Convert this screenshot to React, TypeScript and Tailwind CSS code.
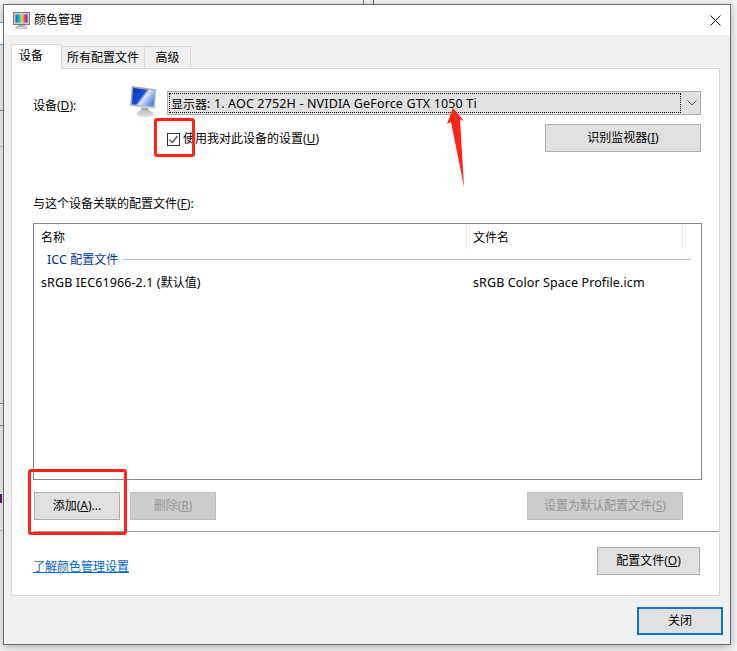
import React from "react";

const FONT = "font-['Noto_Sans','Noto_Sans_CJK_SC',sans-serif]";
// latin runs come out a bit wider than the CJK size in the reference
const LATIN = "text-[12.5px] tracking-[0.1px]";

function TitleIcon() {
  return (
    <svg width="17" height="17" viewBox="0 0 17 17" className="shrink-0">
      <defs>
        <linearGradient id="rainbow" x1="0" y1="0" x2="1" y2="0">
          <stop offset="0" stopColor="#1565d8" />
          <stop offset="0.3" stopColor="#17b8c8" />
          <stop offset="0.55" stopColor="#e8e020" />
          <stop offset="0.8" stopColor="#e82a8a" />
          <stop offset="1" stopColor="#8a22d8" />
        </linearGradient>
      </defs>
      <rect x="0.5" y="0.5" width="16" height="12" fill="#c9ccd0" stroke="#777b80" />
      <rect x="2.5" y="2.5" width="12" height="8" fill="url(#rainbow)" />
      <rect x="5" y="13" width="7" height="1.5" fill="#a9adb2" />
      <rect x="3" y="14.5" width="11" height="2" fill="#d4d6d9" stroke="#9a9da1" strokeWidth="0.5" />
    </svg>
  );
}

function MonitorIcon() {
  return (
    <svg width="29" height="32" viewBox="0 0 31 34" className="shrink-0">
      <defs>
        <linearGradient id="screen" x1="0" y1="0" x2="1" y2="0.6">
          <stop offset="0" stopColor="#0a2ca8" />
          <stop offset="0.5" stopColor="#1450d8" />
          <stop offset="0.62" stopColor="#dfe9fb" />
          <stop offset="1" stopColor="#5f86d8" />
        </linearGradient>
        <linearGradient id="frame" x1="0" y1="0" x2="1" y2="1">
          <stop offset="0" stopColor="#8f98a8" />
          <stop offset="1" stopColor="#d3d6da" />
        </linearGradient>
        <linearGradient id="foot" x1="0" y1="0" x2="0" y2="1">
          <stop offset="0" stopColor="#b8bbbf" />
          <stop offset="1" stopColor="#e6e7e8" />
        </linearGradient>
      </defs>
      <path d="M2 0 L28 3.5 L27 24.5 L0 21 Z" fill="url(#frame)" />
      <path d="M3.5 2 L26.5 5 L25.5 22 L2 19.5 Z" fill="url(#screen)" />
      <path d="M12 23 L20 24 L20 27 L12 27 Z" fill="#a3a7ac" />
      <ellipse cx="16" cy="29.5" rx="9" ry="4" fill="url(#foot)" />
    </svg>
  );
}

function Btn({
  children,
  className = "",
  disabled = false,
}: {
  children: React.ReactNode;
  className?: string;
  disabled?: boolean;
}) {
  return (
    <div
      className={`h-[28px] flex items-center justify-center border shrink-0 text-[12px] ${
        disabled
          ? "bg-[#cccccc] border-[#bfbfbf] text-[#969696]"
          : "bg-[#e1e1e1] border-[#adadad] text-black"
      } ${className}`}
    >
      {children}
    </div>
  );
}

export default function App() {
  return (
    <div className={`relative w-[737px] h-[651px] overflow-hidden bg-[#f4f4f4] ${FONT}`}>
      {/* bits of other windows behind the dialog */}
      <div className="absolute left-0 top-[22px] w-[3px] h-[23px] border-y border-[#5b9bd5] bg-white" />
      <div className="absolute left-0 top-[110px] w-[3px] h-px bg-[#8a8a8a]" />
      <div className="absolute left-0 top-[146px] w-[3px] h-px bg-[#a8b4c8]" />
      <div className="absolute left-0 top-[403px] w-[3px] h-px bg-[#8a8a8a]" />
      <div className="absolute left-0 top-[425px] w-[3px] h-px bg-[#8a8a8a]" />
      <div className="absolute left-0 top-[494px] w-[2px] h-[9px] bg-[#5a1a6a]" />
      <div className="absolute left-0 top-[530px] w-[3px] h-px bg-[#b0b0b0]" />
      <div className="absolute left-[363px] top-0 w-px h-[4px] bg-[#777]" />
      <div className="absolute left-[373px] top-0 w-px h-[4px] bg-[#555]" />

      <div className="pt-[4px] pl-[3px]">
        <div className="w-[728px] h-[641px] border border-[#6e6e6e] bg-[#f0f0f0] flex flex-col shadow-[0_2px_8px_rgba(0,0,0,0.3)]">
          {/* title bar */}
          <div className="h-[30px] bg-white flex items-center pl-[9px] pr-[9px] shrink-0">
            <TitleIcon />
            <span className="ml-[4px] text-[12px] text-black">颜色管理</span>
            <svg width="11" height="11" viewBox="0 0 11 11" className="ml-auto">
              <path d="M0.5 0.5 L10.5 10.5 M10.5 0.5 L0.5 10.5" stroke="#111" strokeWidth="1" />
            </svg>
          </div>

          {/* tabs */}
          <div className="pl-[7px] pt-[9px] flex items-end h-[33px] shrink-0 text-[12px] text-black">
            <div className="relative z-10 w-[51px] h-[25px] -mb-px bg-white border border-b-0 border-[#d9d9d9] flex items-center pl-[7px] pb-[3px]">
              设备
            </div>
            <div className="w-[83px] h-[22px] border border-l-0 border-b-0 border-[#d9d9d9] flex items-center justify-center">
              所有配置文件
            </div>
            <div className="w-[46px] h-[22px] border border-l-0 border-b-0 border-[#d9d9d9] flex items-center justify-center">
              高级
            </div>
          </div>

          {/* tab panel */}
          <div className="ml-[7px] w-[709px] h-[528px] bg-white border border-[#d9d9d9] shrink-0 pl-[21px] pt-[22px] text-[12px] text-black">
            <div className="flex items-center w-[668px] h-[24px]">
              <span className="w-[97px] pt-[6px]">
                设备(<u>D</u>):
              </span>
              <div className="w-[37px] -mt-[2px]">
                <MonitorIcon />
              </div>
              <div className="w-[534px] h-[24px] bg-[#e1e1e1] border border-[#adadad] flex items-center pl-[1px]">
                <div className="w-[512px] h-[20px] border border-dotted border-black flex items-center pl-[1px] pt-[3px]">
                  显示器<span className="text-[12.5px] tracking-[0.15px]">: 1. AOC 2752H - NVIDIA GeForce GTX 1050 Ti</span>
                </div>
                <svg width="10" height="6" viewBox="0 0 10 6" className="ml-[6px]">
                  <path d="M0.5 0.5 L5 5 L9.5 0.5" fill="none" stroke="#606060" />
                </svg>
              </div>
            </div>

            <div className="flex items-start w-[668px] mt-[9px] pl-[134px]">
              <div className="flex items-center mt-[6px]">
                <div className="w-[13px] h-[13px] border border-[#333] flex items-center justify-center">
                  <svg width="11" height="11" viewBox="0 0 11 11">
                    <path d="M1.5 5.5 L4.5 8.5 L9.5 2" fill="none" stroke="#555" strokeWidth="1.3" />
                  </svg>
                </div>
                <span className="ml-[3px]">
                  使用我对此设备的设置(<u>U</u>)
                </span>
              </div>
              <Btn className="ml-auto w-[156px]">
                识别监视器(<u>I</u>)
              </Btn>
            </div>

            <div className="mt-[43px] leading-[18px]">
              与这个设备关联的配置文件(<u>F</u>):
            </div>

            {/* profile list */}
            <div className="mt-[10px] w-[669px] h-[257px] border border-[#828790] bg-white pt-[1px]">
              <div className="flex h-[24px] items-center">
                <span className="w-[433px] pl-[7px] pt-[2px] h-full flex items-center border-r border-[#e5e5e5]">名称</span>
                <span className="w-[216px] pl-[6px] pt-[2px] h-full flex items-center border-r border-[#e5e5e5]">文件名</span>
              </div>
              <div className="flex items-center h-[20px] pl-[13px] pr-[10px] mt-[1px] text-[#003399]">
                <span className="w-[76px] whitespace-nowrap">
                  <span className={LATIN}>ICC</span> 配置文件
                </span>
                <div className="h-px flex-1 bg-[#b0bcd6] -mt-[2px]" />
              </div>
              <div className="flex items-center h-[20px] mt-[3px]">
                <span className="w-[433px] pl-[7px]">
                  <span className={LATIN}>sRGB IEC61966-2.1 (</span>默认值<span className={LATIN}>)</span>
                </span>
                <span className={`pl-[6px] ${LATIN}`}>sRGB Color Space Profile.icm</span>
              </div>
            </div>

            <div className="flex w-[650px] mt-[12px] pl-px">
              <Btn className="w-[86px]">
                添加(<u>A</u>)...
              </Btn>
              <Btn disabled className="w-[86px] ml-[10px]">
                删除(<u>R</u>)
              </Btn>
              <Btn disabled className="w-[156px] ml-auto">
                设置为默认配置文件(<u>S</u>)
              </Btn>
            </div>

            <div className="h-px w-[686px] bg-[#a0a0a0] mt-[11px]" />

            <div className="flex items-start w-[667px] mt-[15px]">
              <a className="text-[#0066cc] underline mt-[11px]">了解颜色管理设置</a>
              <Btn className="ml-auto w-[103px]">
                配置文件(<u>O</u>)
              </Btn>
            </div>
          </div>

          {/* footer */}
          <div className="flex justify-end pr-[7px] mt-[11px]">
            <div className="w-[86px] h-[28px] bg-[#e1e1e1] border-2 border-[#0078d7] flex items-center justify-center text-[12px] text-black">
              关闭
            </div>
          </div>
        </div>
      </div>

      {/* red annotations */}
      <div className="absolute left-[154px] top-[118px] w-[41px] h-[39px] border-[3px] border-[#ff2417] rounded-[3px]" />
      <div className="absolute left-[28px] top-[469px] w-[99px] h-[66px] border-[3px] border-[#ff2417] rounded-[3px]" />
      <svg className="absolute left-[440px] top-[100px]" width="30" height="92" viewBox="0 0 30 92">
        <path d="M13 8 L24 21 L20 19 L24 87 L11 22 L7 24 Z" fill="#ff2417" />
      </svg>
    </div>
  );
}
